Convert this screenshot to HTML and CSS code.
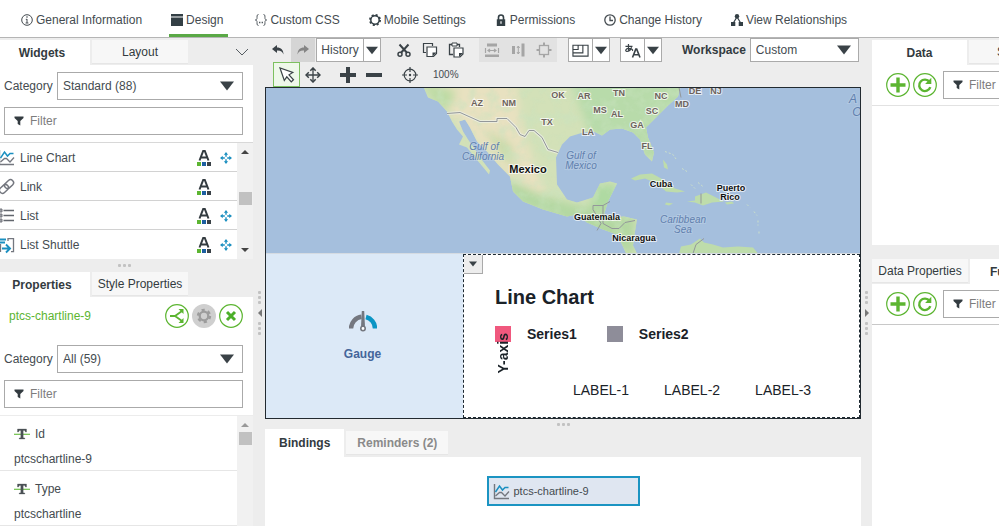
FILE: index.html
```html
<!DOCTYPE html>
<html lang="en">
<head>
<meta charset="utf-8">
<title>Mashup Builder</title>
<link rel="stylesheet" href="styles.css">
</head>
<body>
<svg class="defs" aria-hidden="true">
  <symbol id="funnel" viewBox="0 0 10 10"><path d="M0.5 0.5h9v1.6L6.3 5v4.6L3.7 8V5L0.5 2.1z" fill="#333b40"/></symbol>
  <symbol id="down" viewBox="0 0 14 10"><path d="M0 0.5h14L7 9.5z" fill="#3a4247"/></symbol>
  <symbol id="fourway" viewBox="0 0 16 16"><path d="M8 1v14M1 8h14" fill="none" stroke="currentColor" stroke-width="1.3"/><path d="M5.3 3.8L8 1l2.7 2.8M5.3 12.2L8 15l2.7-2.8M3.8 5.3L1 8l2.8 2.7M12.2 5.3L15 8l-2.8 2.7" fill="none" stroke="currentColor" stroke-width="1.5"/></symbol>
  <symbol id="responsive" viewBox="0 0 12 12"><path d="M6 0.8v4M6 7.2v4M0.8 6h4M7.2 6h4" stroke="#1b8fc0" stroke-width="1.4"/><path d="M3.800 2.700h4.400L6 0.200zM3.800 9.300h4.400L6 11.800zM2.700 3.800v4.400L0.200 6zM9.300 3.800v4.400L11.800 6z" fill="#1b8fc0"/></symbol>
  <symbol id="themed" viewBox="0 0 14 16"><path d="M2.500 10.500L6.200 1h1.600l3.700 9.500M4 7.500h6" fill="none" stroke="#333b40" stroke-width="2"/><path d="M0 12h4v4H0z" fill="#5cb531"/><path d="M5 12h4v4H5z" fill="#1d5fa0"/><path d="M10 12h4v4h-4z" fill="#3a4247"/></symbol>
  <symbol id="chart" viewBox="0 0 17 17"><path d="M1.500 1v14.500H16" fill="none" stroke="#74777f" stroke-width="1.400"/><path d="M2.500 9L6.500 3l3 4L12 4.500l3.500 0" fill="none" stroke="#1b8fc0" stroke-width="1.500"/><path d="M2.500 13l4-3.500h2l3.500 3.500 4-4.500" fill="none" stroke="#74777f" stroke-width="1.300"/></symbol>
  <symbol id="plus" viewBox="0 0 24 24"><circle cx="12" cy="12" r="11.300" fill="#fff" stroke="#5cb531" stroke-width="1.200"/><path d="M12 4.500v15M4.500 12h15" stroke="#5cb531" stroke-width="3.400"/></symbol>
  <symbol id="refresh" viewBox="0 0 24 24"><circle cx="12" cy="12" r="11.300" fill="#fff" stroke="#5cb531" stroke-width="1.200"/><path d="M16.500 9A5.700 5.700 0 1 0 17.300 14.200" fill="none" stroke="#5cb531" stroke-width="2.400"/><path d="M18.300 4.800v6.200h-6.200z" fill="#5cb531"/></symbol>
  <symbol id="string" viewBox="0 0 16 12"><path d="M0 6.300h16" stroke="#6fc04a" stroke-width="1.200"/><path d="M3.500 1h9v3h-1.100l-.5-1.500H9.200v7.200l1.600.4V11H5.200v-.9l1.600-.4V2.500H5.100L4.600 4H3.500z" fill="#4a5055" stroke="#4a5055" stroke-width=".3"/></symbol>
</svg>

<nav class="topnav">
  <a href="#"><svg viewBox="0 0 12 12"><circle cx="6" cy="6" r="5.300" fill="none" stroke="#444b50"/><path d="M6 5v4M4.800 5.300H6M4.600 9h2.800" stroke="#444b50" fill="none"/><circle cx="6" cy="3" r=".8" fill="#444b50"/></svg>General Information</a>
  <a href="#" class="current"><svg viewBox="0 0 12 12"><path d="M0 0h12v2.600H0zM0 3.600h12V12H0z" fill="#333f45"/></svg>Design</a>
  <a href="#"><svg viewBox="0 0 12 12"><path d="M3.500.5C1.500.5 2.200 3 2 4.500 1.900 5.500 1 6 .3 6c.7 0 1.600.5 1.700 1.500.2 1.500-.5 4 1.500 4M8.500.5c2 0 1.300 2.500 1.500 4 .1 1 1 1.500 1.700 1.500-.7 0-1.600.5-1.700 1.500-.2 1.500.5 4-1.500 4" fill="none" stroke="#555c61"/><path d="M4 8.500h1.400M6.600 8.500H8" stroke="#555c61" stroke-width="1.400"/></svg>Custom CSS</a>
  <a href="#"><svg viewBox="0 0 12 12"><circle cx="6" cy="6" r="5" fill="none" stroke="#333f45" stroke-width="2" stroke-dasharray="2 1.927"/><circle cx="6" cy="6" r="4.200" fill="none" stroke="#333f45" stroke-width="1.500"/></svg>Mobile Settings</a>
  <a href="#"><svg viewBox="0 0 12 12"><path d="M3.500 6V3.500a2.500 2.500 0 0 1 5 0V6" fill="none" stroke="#333f45" stroke-width="1.600"/><path d="M1.800 5.300h8.400V12H1.800z" fill="#333f45"/><path d="M6 7.300v2.500" stroke="#fff" stroke-width="1.200"/></svg>Permissions</a>
  <a href="#"><svg viewBox="0 0 12 12"><circle cx="6" cy="6" r="5.200" fill="none" stroke="#444b50" stroke-width="1.300"/><path d="M6 2.500V6.500h3" fill="none" stroke="#444b50" stroke-width="1.300"/></svg>Change History</a>
  <a href="#"><svg viewBox="0 0 12 12"><path d="M2 9.500L6 3l4 6.500" fill="none" stroke="#333f45" stroke-width="1.200"/><circle cx="6" cy="2.200" r="2.200" fill="#333f45"/><path d="M0 8h4.300v4H0zM7.700 8H12v4H7.700z" fill="#333f45"/></svg>View Relationships</a>
</nav>

<div class="workbench">
  <aside class="side">
    <div class="tabs top">
      <button class="tab active w90 pull">Widgets</button>
      <button class="tab w96">Layout</button>
      <button class="collapse" aria-label="Collapse"><svg width="14" height="8" viewBox="0 0 14 8"><path d="M1 1l6 6 6-6" fill="none" stroke="#555c61"/></svg></button>
    </div>
    <section class="pane">
      <div class="controls">
        <div class="field"><label for="wcat">Category</label><div class="select"><select id="wcat"><option>Standard (88)</option></select><svg class="big"><use href="#down"/></svg></div></div>
        <div class="filter"><svg><use href="#funnel"/></svg><input type="text" placeholder="Filter" aria-label="Filter widgets"></div>
      </div>
      <div class="scroller lined">
        <ul class="widgets">
          <li><svg class="wicon"><use href="#chart"/></svg><span>Line Chart</span><svg class="theme"><use href="#themed"/></svg><svg class="resp"><use href="#responsive"/></svg></li>
          <li><svg class="wicon" viewBox="0 0 17 17"><g transform="rotate(-43 8.500 8.500)" fill="none" stroke="#74777f" stroke-width="1.500"><rect x="0" y="5.500" width="10" height="6" rx="3"/><rect x="7" y="5.500" width="10" height="6" rx="3"/></g></svg><span>Link</span><svg class="theme"><use href="#themed"/></svg><i class="resp"></i></li>
          <li><svg class="wicon" viewBox="0 0 17 17"><path d="M5.500 3.500H16M5.500 8.500H16M5.500 13.500H16" stroke="#62666d" stroke-width="1.700"/><path d="M1 2h3v3H1zM1 7h3v3H1zM1 12h3v3H1z" fill="#9a9da3" stroke="#74777f"/></svg><span>List</span><svg class="theme"><use href="#themed"/></svg><svg class="resp"><use href="#responsive"/></svg></li>
          <li><svg class="wicon" viewBox="0 0 17 17"><path d="M0 2.500h8M0 5.500h7" stroke="#1b8fc0" stroke-width="2"/><path d="M10 4V1.700h5.500v13H13M2.500 7v8" fill="none" stroke="#74777f" stroke-width="1.300"/><path d="M4 11.500h7M8 7.500l4 4-4 4" fill="none" stroke="#1b8fc0" stroke-width="1.900"/></svg><span>List Shuttle</span><svg class="theme"><use href="#themed"/></svg><svg class="resp"><use href="#responsive"/></svg></li>
        </ul>
        <div class="bar"><i class="up"></i><i class="thumb mid"></i><i class="dn"></i></div>
      </div>
    </section>
    <div class="split"><i></i><i></i><i></i></div>
    <div class="tabs">
      <button class="tab active w90 pull">Properties</button>
      <button class="tab w96">Style Properties</button>
    </div>
    <section class="pane grow">
      <div class="controls">
        <div class="idrow"><span>ptcs-chartline-9</span>
          <button aria-label="Bindings"><svg viewBox="0 0 24 24"><circle cx="12" cy="12" r="11.300" fill="#fff" stroke="#5cb531" stroke-width="1.200"/><path d="M5 12h5l7-5M10 12l7 5" fill="none" stroke="#5cb531" stroke-width="1.800"/><path d="M13.500 5h5v5zM13.500 19h5v-5z" fill="#5cb531"/></svg></button>
          <button aria-label="Configure"><svg viewBox="0 0 24 24"><circle cx="12" cy="12" r="12" fill="#cfcfcf"/><circle cx="12" cy="12" r="6" fill="none" stroke="#9c9c9c" stroke-width="2.400" stroke-dasharray="3.140 3.142"/><circle cx="12" cy="12" r="4.300" fill="none" stroke="#9c9c9c" stroke-width="2.300"/></svg></button>
          <button aria-label="Delete"><svg viewBox="0 0 24 24"><circle cx="12" cy="12" r="11.300" fill="#fff" stroke="#5cb531" stroke-width="1.200"/><path d="M8 8l8 8M16 8l-8 8" stroke="#4caf2a" stroke-width="3"/></svg></button>
        </div>
        <div class="field"><label for="pcat">Category</label><div class="select"><select id="pcat"><option>All (59)</option></select><svg class="big"><use href="#down"/></svg></div></div>
        <div class="filter"><svg><use href="#funnel"/></svg><input type="text" placeholder="Filter" aria-label="Filter properties"></div>
      </div>
      <div class="scroller faint grow">
        <dl class="props">
          <div><dt><svg><use href="#string"/></svg>Id</dt><dd>ptcschartline-9</dd></div>
          <div><dt><svg><use href="#string"/></svg>Type</dt><dd>ptcschartline</dd></div>
        </dl>
        <div class="bar faded"><i class="up"></i><i class="thumb"></i></div>
      </div>
    </section>
  </aside>

  <div class="gutter"><i></i><i></i><i></i><b class="left"></b><i></i><i></i><i></i></div>

  <main class="center">
    <div class="toolbar">
      <button class="tool" aria-label="Undo"><svg viewBox="0 0 16 16"><path d="M7 3L2 7l5 4V8.500c3.500-.2 5.500 1 6.500 4C13.500 8 11 5.500 7 5.500z" fill="#3a4247"/></svg></button>
      <button class="tool dim" aria-label="Redo" disabled><svg viewBox="0 0 16 16"><path d="M9 3l5 4-5 4V8.500c-3.500-.2-5.500 1-6.500 4C2.500 8 5 5.500 9 5.500z" fill="#858585"/></svg></button>
      <div class="combo"><button>History</button><button aria-label="Show history"><svg class="small"><use href="#down"/></svg></button></div>
      <div class="group">
        <button class="tool" aria-label="Cut"><svg viewBox="0 0 16 16"><path d="M3.500 2.500l7.700 8.500M12.500 2.500L4.800 11" stroke="#3a4247" stroke-width="2"/><circle cx="4" cy="12.300" r="2" fill="none" stroke="#3a4247" stroke-width="1.500"/><circle cx="12" cy="12.300" r="2" fill="none" stroke="#3a4247" stroke-width="1.500"/></svg></button>
        <button class="tool" aria-label="Copy"><svg viewBox="0 0 16 16"><path d="M4 10.500H1.500v-9h9V4" fill="none" stroke="#3a4247" stroke-width="1.200"/><path d="M5 5h9.500v6.500l-3 3H5z" fill="#fff" stroke="#3a4247" stroke-width="1.200"/><path d="M10.500 10.500h4l-4 4z" fill="#3a4247"/></svg></button>
        <button class="tool" aria-label="Paste"><svg viewBox="0 0 16 16"><path d="M5 12.500H1.500v-10H4M9 2.500h2.500V5" fill="none" stroke="#3a4247" stroke-width="1.300"/><path d="M4 1h5v3H4z" fill="#fff" stroke="#3a4247"/><path d="M6 6h9v6l-3 3H6z" fill="#fff" stroke="#3a4247" stroke-width="1.200"/><path d="M11 11h4l-4 4z" fill="#3a4247"/></svg></button>
      </div>
      <div class="group off">
        <button class="tool" aria-label="Match width" disabled><svg viewBox="0 0 16 16"><path d="M3 1.500h10v3H3z" fill="#a5a5a5"/><path d="M1.500 6v5M14.500 6v5M4 8.500h8M6 7L4 8.500 6 10M10 7l2 1.500L10 10" fill="none" stroke="#a5a5a5" stroke-width="1.200"/><path d="M1 12.500h14v2.500H1z" fill="#a5a5a5"/></svg></button>
        <button class="tool" aria-label="Match height" disabled><svg viewBox="0 0 16 16"><path d="M2 4h3v8H2z" fill="#a5a5a5"/><path d="M11.500 1.500h3v13h-3z" fill="#a5a5a5"/><path d="M8.300 4v8M7 6l1.300-2L9.600 6M7 10l1.300 2 1.300-2" fill="none" stroke="#a5a5a5"/></svg></button>
        <button class="tool" aria-label="Fit size" disabled><svg viewBox="0 0 16 16"><rect x="3.500" y="3.500" width="9" height="9" fill="none" stroke="#a5a5a5" stroke-width="1.300"/><path d="M8 0.500v3M8 12.500v3M.5 8h3M12.500 8h3" stroke="#a5a5a5" stroke-width="2"/></svg></button>
      </div>
      <div class="combo icons"><button aria-label="Layout"><svg class="pic" viewBox="0 0 18 14"><path d="M1 1.500h16v11.500H1zM6.500 1.500v4.500H1M1 9.500h10.500V1.500" fill="none" stroke="#3a4247" stroke-width="1.200"/></svg></button><button aria-label="Layout options"><svg class="small"><use href="#down"/></svg></button></div>
      <div class="combo icons"><button aria-label="Localization"><svg class="pic" viewBox="0 0 18 16"><path d="M1.500 3.500h7.500M4.700 1v5.500c0 1.500.3 2 .8 2.500M8 4.500C7 7.500 5 9 3 9 1 9 1.300 5.800 5 5.800c3.500 0 4.500 1.200 4 2.700" fill="none" stroke="#3a4247" stroke-width="1.300"/><path d="M9 15.500l3.500-9h1l3.500 9M10.500 12.500h5" fill="none" stroke="#3a4247" stroke-width="1.700"/></svg></button><button aria-label="Localization options"><svg class="small"><use href="#down"/></svg></button></div>
      <label class="wslabel" for="ws">Workspace</label>
      <div class="select ws"><select id="ws"><option>Custom</option></select><svg class="big"><use href="#down"/></svg></div>
    </div>
    <div class="toolbar second">
      <button class="tool picked" aria-label="Select"><svg viewBox="0 0 16 16"><path d="M1 1l4.300 12.500 2.500-3.700 4.500 5 2.200-2-4.500-5 3.800-2.300z" fill="#fff" stroke="#3a4247" stroke-width="1.200"/></svg></button>
      <button class="tool" aria-label="Pan"><svg color="#3a4247"><use href="#fourway"/></svg></button>
      <div class="group near">
        <button class="tool" aria-label="Zoom in"><svg viewBox="0 0 16 16"><path d="M8 0v16M0 8h16" stroke="#3a4247" stroke-width="4"/></svg></button>
        <button class="tool" aria-label="Zoom out"><svg viewBox="0 0 16 16"><path d="M0 8h16" stroke="#3a4247" stroke-width="4"/></svg></button>
      </div>
      <div class="group"><button class="tool" aria-label="Zoom to fit"><svg viewBox="0 0 16 16"><circle cx="8" cy="8" r="5.800" fill="none" stroke="#3a4247" stroke-width="1.200"/><path d="M8 0v5M8 11v5M0 8h5M11 8h5" stroke="#3a4247" stroke-width="1.200"/><circle cx="8" cy="8" r="1.200" fill="#3a4247"/></svg></button></div>
      <span class="zoom">100%</span>
    </div>

    <div class="canvas">
      <svg class="map" viewBox="266 88 594 166" preserveAspectRatio="xMidYMid slice" role="img" aria-label="Map">
        <defs>
          <clipPath id="land"><path d="M423 86L428 98 438 102 447 112 452 122 457 130 463 137 459 145 467 148 475 158 485 170 489 175 490 171 483 162 475 150 468 140 463 132 459 122 465 120 470 128 477 142 487 152 498 165 510 177 513 192 523 202 543 210 567 217 577 215 587 223 603 230 617 235 622 245 627 256H638L633 246 635 232 637 220 624 217 612 218 604 215 608 202 617 184 610 182 600 184 593 198 577 203 567 200 557 185 556 158 562 145 570 137 583 133 594 132 602 136 610 130 622 129 633 133 640 140 645 155 652 162 654 153 648 138 646 128 657 117 668 106 678 97 681 86z"/></clipPath>
          <filter id="soft" x="-30%" y="-30%" width="160%" height="160%"><feGaussianBlur stdDeviation="4"/></filter>
          <filter id="mottle" x="0" y="0" width="100%" height="100%"><feTurbulence type="fractalNoise" baseFrequency=".08" numOctaves="3" seed="8"/><feColorMatrix values="0 0 0 0 .58  0 0 0 0 .77  0 0 0 0 .52  3 0 0 0 -1.300"/></filter>
        </defs>
        <path d="M260 80h610v180H260z" fill="#a5bfdd"/>
        <g clip-path="url(#land)">
          <path d="M410 80h280v180H410z" fill="#d3e1b8"/>
          <g filter="url(#soft)">
            <path d="M430 80h85l10 60 20 50-10 15-25-25-40-45-25-25z" fill="#e8e1c0"/>
            <path d="M570 80h120l-30 85-70-30z" fill="#b8dbaa"/>
            <path d="M500 175l45 22 30 8 60 12v40l-55-28-62-25z" fill="#b4d8a2"/>
            <path d="M420 80l12 20 15 12 10-20z" fill="#bddba4"/>
            <path d="M485 130l15 25 15 15-4-25z" fill="#c8daa8"/>
            <path d="M593 185h28l-8 25h-22z" fill="#afdaa2"/>
          </g>
          <path d="M410 80h280v180H410z" filter="url(#mottle)" opacity=".45"/>
        </g>
        <g fill="#bedcab">
          <path d="M631 179l9-4 12-1 11 6 12 9 10 3-8 1-11-1-9-8-12-5-10 2z"/>
          <path d="M687 202l8-1v-4l11-4 8 4 10 5-12 1-9 3-8-3zM725 203l7-1 2 2-7 1zM666 203l7 1-4 2-4-1z"/>
          <path d="M679 254l2-7 10-2 9-6 4 4 9 2 10 3 15-1 15 1 5 6zM663 160l4 5 1 5-4-2z"/>
        </g>
        <path d="M665 152l8 3 4 6m5 8l5 3m4 13l4 4m3-6l5 4m44 18l3 3m4 4l3 4m1 5v5m1 6v4" fill="none" stroke="#cce0c9" stroke-dasharray="2 2"/>
        <path d="M447 114l13-1 20 9h17v-3h10l9 9 4 7 5 2 4-6h5l8 7 6 12 10 3" fill="none" stroke="#eef1e8" stroke-width="3" opacity=".7"/>
        <path d="M447 114l13-1 20 9h17v-3h10l9 9 4 7 5 2 4-6h5l8 7 6 12 10 3M610 202l-7 4h-10v4l8 14-4 7M603 206v18l9 5h7l6-6 10-2M679 88l2 10M701 194v10M704 239l-8 6-3 9" fill="none" stroke="#93979a"/>
        <g class="st"><text x="477" y="106">AZ</text><text x="509" y="106">NM</text><text x="558" y="98">OK</text><text x="584" y="99">AR</text><text x="619" y="96">TN</text><text x="600" y="113">MS</text><text x="617" y="117">AL</text><text x="547" y="125">TX</text><text x="588" y="135">LA</text><text x="661" y="99">NC</text><text x="682" y="107">MD</text><text x="652" y="114">SC</text><text x="637" y="128">GA</text><text x="647" y="149">FL</text><text x="695" y="94">DE</text><text x="716" y="94">NJ</text></g>
        <g class="sea"><text x="484" y="150">Gulf of</text><text x="483" y="160">California</text><text x="581" y="159">Gulf of</text><text x="581" y="169">Mexico</text><text x="683" y="223">Caribbean</text><text x="683" y="233">Sea</text></g>
        <g class="sea large"><text x="853" y="103">A</text><text x="857" y="116">O</text></g>
        <g class="country"><text class="main" x="528" y="173">Mexico</text><text x="597" y="220">Guatemala</text><text x="634" y="241">Nicaragua</text><text x="661" y="187">Cuba</text><text x="731" y="191">Puerto</text><text x="730" y="200">Rico</text></g>
      </svg>
      <div class="cells">
        <div class="gauge">
          <svg width="28" height="21" viewBox="0 0 28 21"><path d="M2 17.500A12 12 0 0 1 12.500 5.800" fill="none" stroke="#74777f" stroke-width="4.500"/><path d="M17 6A12 12 0 0 1 26 17.500" fill="none" stroke="#0b95c4" stroke-width="4.500"/><path d="M12.800 0h2.400l.8 16h-4z" fill="#74777f"/><circle cx="14" cy="17.500" r="2.200" fill="#fff" stroke="#74777f" stroke-width="1.600"/></svg>
          <span>Gauge</span>
        </div>
        <div class="linechart">
          <button class="menu" aria-label="Widget menu"><svg><use href="#down"/></svg></button>
          <h2>Line Chart</h2>
          <div class="legend"><i class="pink"></i><span>Series1</span><i class="grey"></i><span>Series2</span></div>
          <span class="yaxis">Y-axis</span>
          <div class="xlabels"><span>LABEL-1</span><span>LABEL-2</span><span>LABEL-3</span></div>
        </div>
      </div>
    </div>
    <div class="split thin"><i></i><i></i><i></i></div>
    <div class="tabs lower">
      <button class="tab active">Bindings</button>
      <button class="tab muted">Reminders (2)</button>
    </div>
    <section class="bindings"><div class="node"><svg><use href="#chart"/></svg>ptcs-chartline-9</div></section>
  </main>

  <div class="gutter"><i></i><i></i><i></i><b class="right"></b><i></i><i></i><i></i></div>

  <aside class="side data">
    <div class="tabs top">
      <button class="tab active w95">Data</button>
      <button class="tab cut">S</button>
    </div>
    <section class="pane upper">
      <div class="datarow"><button aria-label="Add data"><svg><use href="#plus"/></svg></button><button aria-label="Refresh data"><svg><use href="#refresh"/></svg></button><div class="filter"><svg><use href="#funnel"/></svg><input type="text" placeholder="Filter" aria-label="Filter data"></div></div>
    </section>
    <div class="split"></div>
    <div class="tabs">
      <button class="tab w96">Data Properties</button>
      <button class="tab active cut2">Fu</button>
    </div>
    <section class="pane grow">
      <div class="datarow strong"><button aria-label="Add function"><svg><use href="#plus"/></svg></button><button aria-label="Refresh functions"><svg><use href="#refresh"/></svg></button><div class="filter"><svg><use href="#funnel"/></svg><input type="text" placeholder="Filter" aria-label="Filter functions"></div></div>
    </section>
  </aside>
</div>
</body>
</html>
```
FILE: styles.css
```css
* { box-sizing: border-box; }
body {
  margin: 0;
  height: 100vh;
  display: flex;
  flex-direction: column;
  overflow: hidden;
  background: #ededed;
  color: #444b50;
  font: 12px/16px "Liberation Sans", Arial, sans-serif;
}
button, input, select { font: inherit; color: inherit; margin: 0; border-radius: 0; }
button { border: 0; padding: 0; background: none; }
svg { display: block; flex: none; }
ul, dl, dd, h2 { margin: 0; padding: 0; list-style: none; }
.defs { position: absolute; width: 0; height: 0; }
.grow { flex: 1; min-height: 0; }

/* Top navigation */
.topnav {
  display: flex;
  flex: none;
  gap: 25px;
  height: 38px;
  padding: 5px 19px 0;
  background: #fff;
  border-bottom: 1px solid #b5b5b5;
}
.topnav a {
  display: flex;
  align-items: center;
  gap: 3px;
  padding: 0 2px;
  color: inherit;
  text-decoration: none;
  white-space: nowrap;
  border-bottom: 3px solid transparent;
}
.topnav a.current { border-color: #5aa946; padding-right: 5px; }
.topnav svg { width: 12px; height: 12px; }

.workbench {
  flex: 1;
  min-height: 0;
  display: grid;
  grid-template-columns: 254px 11px minmax(0, 1fr) 11px 127px;
}
.side { display: flex; flex-direction: column; min-width: 0; min-height: 0; overflow: hidden; }

/* Tabs */
.tabs { display: flex; flex: none; gap: 2px; height: 25px; align-items: flex-start; }
.tabs.top { height: 27px; padding-top: 2px; }
.tab {
  flex: none;
  height: 24px;
  background: #f7f7f7;
  border-bottom: 1px solid #e6e6e6;
  color: #333b40;
  white-space: nowrap;
}
.tab.active { height: 25px; background: #fff; border: 0; font-weight: bold; }
.w90 { width: 90px; }
.w95 { width: 95px; }
.w96 { width: 96px; }
.tab.pull { padding-right: 6px; }
.cut { padding: 0 28px; }
.cut2 { padding: 0 20px; }
.collapse { margin-left: auto; margin-right: 5px; height: 24px; }

/* Panes */
.pane { background: #fff; display: flex; flex-direction: column; flex: none; }
.pane.grow { flex: 1; }
.side:first-child .pane { margin-right: 1px; }
.controls { display: flex; flex-direction: column; gap: 7px; padding: 7px 10px 7px 4px; }
.field { display: flex; align-items: center; }
.field label { width: 53px; flex: none; }
.select { position: relative; flex: 1; height: 28px; }
.select select {
  appearance: none;
  width: 100%;
  height: 100%;
  padding: 0 5px;
  background: #fff;
  border: 1px solid #aaa;
}
.select .big { position: absolute; right: 9px; top: 9px; width: 14px; height: 10px; pointer-events: none; }
.filter { display: flex; align-items: center; height: 28px; border: 1px solid #aaa; background: #fff; padding-left: 9px; gap: 6px; }
.filter svg { width: 10px; height: 10px; }
.filter input { flex: 1; min-width: 0; border: 0; padding: 0; background: none; outline: 0; }
.filter input::placeholder { color: #7d7d7d; opacity: 1; }
.scroller { display: flex; overflow: hidden; }
.scroller.lined { border-top: 1px solid #d8d8d8; }
.scroller.faint { border-top: 1px solid #ececec; }
.widgets { flex: 1; }
.widgets li { display: flex; align-items: center; height: 29px; border-bottom: 1px solid #d2d2d2; padding-top: 1px; }
.widgets li:last-child { border: 0; }
.widgets span { flex: 1; padding-left: 5px; }
.wicon { width: 17px; height: 17px; margin-left: -2px; }
.theme { width: 14px; height: 16px; margin-right: 9px; }
.resp { width: 12px; height: 12px; margin-right: 5px; }
.bar { display: flex; flex-direction: column; align-items: center; flex: none; width: 16px; background: #f1f1f1; padding: 7px 0; }
.up, .dn { border: 4px solid transparent; }
.up { border-top: 0; border-bottom-color: #444; }
.dn { border-bottom: 0; border-top-color: #444; margin-top: auto; }
.faded .up { border-bottom-color: #999; }
.thumb { width: 13px; height: 13px; background: #c1c1c1; margin-top: 5px; }
.thumb.mid { margin-top: 38px; }
.split { display: flex; align-items: center; justify-content: center; gap: 2px; height: 13px; flex: none; padding-right: 5px; }
.split i, .gutter i { width: 3px; height: 3px; border-radius: 1px; background: #c2c2c2; }
.split.thin { height: 10px; padding: 0; }

.idrow { display: flex; align-items: center; gap: 3px; height: 24px; margin-bottom: 10px; }
.idrow span { flex: 1; padding-left: 5px; color: #5cb531; }
.idrow svg, .datarow button svg { width: 24px; height: 24px; }
.props { flex: 1; }
.props > div { padding: 10px 14px 3px; border-bottom: 1px solid #e6e6e6; }
.props dt { display: flex; align-items: center; gap: 5px; }
.props dt svg { width: 16px; height: 12px; }
.props dd { margin-top: 9px; }

.gutter { display: flex; flex-direction: column; align-items: center; justify-content: center; gap: 2px; padding-top: 62px; }
.gutter b { border: 4px solid transparent; margin: 3px 0; }
.gutter .left { border-left: 0; border-right-color: #777; }
.gutter .right { border-right: 0; border-left-color: #777; }

/* Toolbars */
.center { display: flex; flex-direction: column; min-width: 0; min-height: 0; }
.toolbar { display: flex; align-items: center; flex: none; height: 24px; }
.toolbar.second { height: 25px; padding-left: 8px; }
.tool { display: flex; align-items: center; justify-content: center; width: 26px; height: 24px; flex: none; }
.tool svg { width: 16px; height: 16px; }
.tool.dim { width: 24px; background: #d5d5d5; margin-right: 1px; }
.tool.picked { width: 27px; height: 25px; border: 1px solid #7cc05f; background: #eef8ea; }
.group { display: flex; margin-left: 10px; }
.group.near { margin-left: 9px; }
.group.off { background: #e2e2e2; }
.combo { display: flex; height: 24px; width: 65px; flex: none; border: 1px solid #aaa; background: #fff; }
.combo button { flex: 1; display: flex; align-items: center; justify-content: center; }
.combo button:last-child { flex: none; width: 17px; border-left: 1px solid #aaa; }
.combo .small { width: 12px; height: 9px; }
.combo .pic { width: 17px; height: 15px; }
.combo.icons { width: 42px; margin-left: 11px; }
.combo.icons + .combo.icons { margin-left: 10px; }
.wslabel { margin-left: 20px; font-weight: bold; color: #333b40; }
.select.ws { height: 24px; margin: 0 2px 0 4px; }
.select.ws .big { top: 7px; right: 8px; }
.zoom { margin-left: 10px; font-size: 10px; }

/* Design canvas */
.canvas { border: 1px solid #222a30; flex: none; }
.map { width: 100%; height: 166px; border-bottom: 1px solid #d5dbe2; }
.map text { text-anchor: middle; font-family: "Liberation Sans", Arial, sans-serif; paint-order: stroke; stroke: #fff; stroke-opacity: .7; stroke-width: 2px; }
.map .st text { font-size: 9px; font-weight: bold; fill: #6d625c; }
.map .sea text { font-size: 10px; font-style: italic; fill: #6180ae; stroke-opacity: .15; }
.map .large text { font-size: 12px; }
.map .country text { font-size: 9px; font-weight: bold; fill: #111; }
.map .country .main { font-size: 11px; }
.cells { display: grid; grid-template-columns: 197px minmax(0, 1fr); height: 164px; background: #fff; }
.gauge {
  display: flex;
  flex-direction: column;
  align-items: center;
  justify-content: center;
  gap: 14px;
  padding-right: 4px;
  background: #dce9f7;
  color: #44659a;
  font-weight: bold;
}
.linechart { position: relative; border: 1px dashed #1c2830; padding: 30px 31px 0; color: #1a2228; }
.linechart .menu {
  position: absolute;
  left: 0;
  top: 0;
  width: 19px;
  height: 19px;
  display: flex;
  align-items: center;
  justify-content: center;
  background: #ededed;
  border-right: 1px solid #aaa;
  border-bottom: 1px solid #aaa;
}
.menu svg { width: 8px; height: 6px; }
.linechart h2 { font-size: 20px; line-height: 24px; }
.legend { display: flex; align-items: center; gap: 16px; margin-top: 17px; font-size: 14px; font-weight: bold; }
.legend i { width: 16px; height: 16px; }
.legend .grey { margin-left: 14px; }
.pink { background: #f0587e; }
.grey { background: #8e8d99; }
.yaxis {
  position: absolute;
  left: 31px;
  top: 78px;
  writing-mode: vertical-rl;
  transform: rotate(180deg);
  font-size: 14px;
  font-weight: bold;
}
.xlabels { display: flex; gap: 35px; margin-top: 40px; padding-left: 78px; font-size: 14px; }

/* Bindings */
.tabs.lower { height: 28px; align-items: center; }
.lower .tab { height: 24px; padding: 0 11px; font-weight: bold; }
.lower .tab.active { height: 28px; padding: 0 14px; }
.tab.muted { color: #8a8a8a; }
.bindings { flex: 1; background: #fff; padding-top: 19px; }
.node {
  display: flex;
  align-items: center;
  gap: 4px;
  width: 153px;
  height: 30px;
  margin: 0 auto;
  padding-left: 4px;
  border: 2px solid #1b94c2;
  background: #dfe6f1;
  font-size: 11px;
}
.node svg { width: 17px; height: 17px; }

/* Data panel */
.upper { height: 180px; }
.data .split { height: 14px; }
.datarow { display: flex; align-items: center; gap: 3px; padding: 6px 0 6px 14px; border-bottom: 1px solid #e2e2e2; }
.datarow.strong { border-color: #c8c8c8; }
.datarow .filter { flex: none; width: 140px; margin-left: 3px; }
```
